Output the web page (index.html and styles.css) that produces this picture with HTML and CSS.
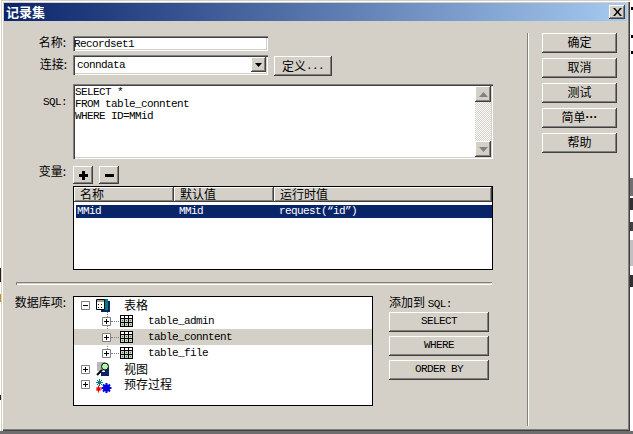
FILE: index.html
```html
<!DOCTYPE html>
<html lang="zh">
<head>
<meta charset="utf-8">
<title>记录集</title>
<link rel="stylesheet" href="styles.css">
</head>
<body>
<div class="desktop">
  <span class="bit bit-a"></span><span class="bit bit-b"></span><span class="bit bit-c"></span>
  <span class="bit bit-d"></span><span class="bit bit-e"></span><span class="bit bit-f"></span>
  <span class="bit bit-g"></span><span class="bit bit-h"></span><span class="bit bit-i"></span>
  <span class="bit bit-j"></span><span class="bit bit-k"></span>
  <div class="dialog">
    <header class="titlebar">
      <span class="title">记录集</span>
      <button class="close" type="button" aria-label="关闭">
        <svg width="9" height="8" viewBox="0 0 9 8"><path d="M0 0h2l2.500 3L7 0h2L5.500 4 9 8H7L4.500 5 2 8H0l3.500-4z" fill="#000"/></svg>
      </button>
    </header>
    <div class="main">
      <form class="form">
        <div class="row row-name">
          <label class="label">名称:</label>
          <div class="input latin">Recordset1</div>
        </div>
        <div class="row row-conn">
          <label class="label">连接:</label>
          <div class="select latin">
            <span class="select-value">conndata</span>
            <span class="select-arrow"><svg width="7" height="4" viewBox="0 0 7 4"><path d="M0 0h7L3.500 4z" fill="#000"/></svg></span>
          </div>
          <button class="btn btn-define" type="button">定义<span class="latin">...</span></button>
        </div>
        <div class="row row-sql">
          <label class="label label-sql latin">SQL:</label>
          <div class="sql">
            <pre class="sql-text latin">SELECT *
FROM table_conntent
WHERE ID=MMid</pre>
            <div class="scrollbar">
              <span class="scroll-btn"><svg width="9" height="5" viewBox="0 0 9 5"><path d="M4.500 0L9 5H0z" fill="#808080"/></svg></span>
              <span class="scroll-track"></span>
              <span class="scroll-btn"><svg width="9" height="5" viewBox="0 0 9 5"><path d="M0 0h9L4.500 5z" fill="#808080"/></svg></span>
            </div>
          </div>
        </div>
        <div class="row row-vars">
          <label class="label">变量:</label>
          <button class="btn btn-icon" type="button" aria-label="添加"><svg width="9" height="9" viewBox="0 0 9 9"><path d="M3 0h3v3h3v3H6v3H3V6H0V3h3z" fill="#000"/></svg></button>
          <button class="btn btn-icon" type="button" aria-label="删除"><svg width="9" height="3" viewBox="0 0 9 3"><path d="M0 0h9v3H0z" fill="#000"/></svg></button>
        </div>
        <div class="row row-table">
          <div class="vars">
            <div class="vars-head">
              <span class="th">名称</span><span class="th">默认值</span><span class="th">运行时值</span>
            </div>
            <div class="vars-row latin">
              <span>MMid</span><span>MMid</span><span>request(“id”)</span>
            </div>
          </div>
        </div>
        <div class="separator"></div>
        <div class="row row-db">
          <label class="label label-db">数据库项:</label>
          <div class="tree">
            <span class="tree-line"></span>
            <div class="node">
              <span class="exp"><svg width="9" height="9" viewBox="0 0 9 9"><path d="M.5.5h8v8h-8z" fill="#fff" stroke="#808080"/><path d="M2 4h5v1H2z"/></svg></span>
              <svg class="node-icon" width="14" height="14" viewBox="0 0 14 14"><path d="M5 3h9v11H5z" fill="#0a246a"/><path d="M6 1h6v11H6z" fill="#007c7c"/><path d="M.5 1.500h8v10h-8z" fill="#fff" stroke="#000"/><path d="M1 2h7v2H1z" fill="#a0a0a0"/><path d="M2 6h1v1H2zM5 6h1v1H5zM2 9h1v1H2zM5 9h1v1H5z"/></svg>
              <span class="node-text node-cjk">表格</span>
            </div>
            <div class="node child">
              <span class="exp"><svg width="9" height="9" viewBox="0 0 9 9"><path d="M.5.5h8v8h-8z" fill="#fff" stroke="#808080"/><path d="M2 4h5v1H2zM4 2h1v5H4z"/></svg></span>
              <span class="dots"></span>
              <svg class="node-icon" width="13" height="12" viewBox="0 0 13 12"><path d="M0 0h13v12H0z" fill="#000"/><path d="M1 1h3v2H1zM5 1h3v2H5zM9 1h3v2H9z" fill="#fff"/><path d="M1 4h3v3H1zM5 4h3v3H5zM9 4h3v3H9zM1 8h3v3H1zM5 8h3v3H5zM9 8h3v3H9z" fill="#d4d0c8"/><path d="M2 5h1v1H2zM6 5h1v1H6zM10 5h1v1h-1zM2 9h1v1H2zM6 9h1v1H6zM10 9h1v1h-1z" fill="#00a050"/></svg>
              <span class="node-text latin">table_admin</span>
            </div>
            <div class="node child is-hover">
              <span class="exp"><svg width="9" height="9" viewBox="0 0 9 9"><path d="M.5.5h8v8h-8z" fill="#fff" stroke="#808080"/><path d="M2 4h5v1H2zM4 2h1v5H4z"/></svg></span>
              <span class="dots"></span>
              <svg class="node-icon" width="13" height="12" viewBox="0 0 13 12"><path d="M0 0h13v12H0z" fill="#000"/><path d="M1 1h3v2H1zM5 1h3v2H5zM9 1h3v2H9z" fill="#fff"/><path d="M1 4h3v3H1zM5 4h3v3H5zM9 4h3v3H9zM1 8h3v3H1zM5 8h3v3H5zM9 8h3v3H9z" fill="#d4d0c8"/><path d="M2 5h1v1H2zM6 5h1v1H6zM10 5h1v1h-1zM2 9h1v1H2zM6 9h1v1H6zM10 9h1v1h-1z" fill="#00a050"/></svg>
              <span class="node-text latin">table_conntent</span>
            </div>
            <div class="node child">
              <span class="exp"><svg width="9" height="9" viewBox="0 0 9 9"><path d="M.5.5h8v8h-8z" fill="#fff" stroke="#808080"/><path d="M2 4h5v1H2zM4 2h1v5H4z"/></svg></span>
              <span class="dots"></span>
              <svg class="node-icon" width="13" height="12" viewBox="0 0 13 12"><path d="M0 0h13v12H0z" fill="#000"/><path d="M1 1h3v2H1zM5 1h3v2H5zM9 1h3v2H9z" fill="#fff"/><path d="M1 4h3v3H1zM5 4h3v3H5zM9 4h3v3H9zM1 8h3v3H1zM5 8h3v3H5zM9 8h3v3H9z" fill="#d4d0c8"/><path d="M2 5h1v1H2zM6 5h1v1H6zM10 5h1v1h-1zM2 9h1v1H2zM6 9h1v1H6zM10 9h1v1h-1z" fill="#00a050"/></svg>
              <span class="node-text latin">table_file</span>
            </div>
            <div class="node">
              <span class="exp"><svg width="9" height="9" viewBox="0 0 9 9"><path d="M.5.5h8v8h-8z" fill="#fff" stroke="#808080"/><path d="M2 4h5v1H2zM4 2h1v5H4z"/></svg></span>
              <svg class="node-icon" width="14" height="14" viewBox="0 0 14 14"><path d="M1 0h8v9H1z" fill="#b8b8b8"/><path d="M9 5h4v9H5v-4h4z" fill="#0a246a"/><circle cx="9" cy="4.500" r="3.500" fill="#b0f8b0" stroke="#000"/><path d="M6 8L1 13" stroke="#000" stroke-width="2"/></svg>
              <span class="node-text node-cjk">视图</span>
            </div>
            <div class="node node-last">
              <span class="exp"><svg width="9" height="9" viewBox="0 0 9 9"><path d="M.5.5h8v8h-8z" fill="#fff" stroke="#808080"/><path d="M2 4h5v1H2zM4 2h1v5H4z"/></svg></span>
              <svg class="node-icon" width="16" height="15" viewBox="0 0 16 15"><circle cx="3.500" cy="3.500" r="1.800" fill="#007c7c"/><path d="M3.500 0v7M0 3.500h7M1 1l5 5M6 1L1 6" stroke="#007c7c"/><circle cx="2.500" cy="10" r="1.800" fill="#f00000"/><path d="M2.500 6.500v7M0 10h6M.500 8l4 4M4.500 8l-4 4" stroke="#f00000"/><circle cx="10.500" cy="9" r="3.500" fill="#0000e0"/><path d="M10.500 4v10M5.500 9h10M7 5.500l7 7M14 5.500l-7 7" stroke="#0000e0" stroke-width="2"/></svg>
              <span class="node-text node-cjk">预存过程</span>
            </div>
          </div>
          <div class="add-sql">
            <div class="add-title">添加到 <span class="latin">SQL:</span></div>
            <button class="btn btn-sql latin" type="button">SELECT</button>
            <button class="btn btn-sql latin" type="button">WHERE</button>
            <button class="btn btn-sql latin" type="button">ORDER BY</button>
          </div>
        </div>
      </form>
      <div class="divider"></div>
      <div class="actions">
        <button class="btn btn-action" type="button">确定</button>
        <button class="btn btn-action" type="button">取消</button>
        <button class="btn btn-action" type="button">测试</button>
        <button class="btn btn-action" type="button">简单<b class="ell">···</b></button>
        <button class="btn btn-action" type="button">帮助</button>
      </div>
    </div>
  </div>
</div>
</body>
</html>
```

FILE: styles.css
```css
* { box-sizing: border-box; }
html, body { margin: 0; padding: 0; }
body {
  width: 633px;
  height: 434px;
  overflow: hidden;
  background: #fff;
  font: 12px/14px "Noto Sans CJK SC", "Liberation Sans", sans-serif;
  color: #000;
}
.desktop {
  position: relative;
  width: 633px;
  height: 434px;
  background: linear-gradient(#6e6e6e, #6e6e6e) left bottom / 100% 3px no-repeat, #fff;
}
.bit { position: absolute; display: block; background: #000; }
.bit-a { left: 631px; top: 7px; width: 2px; height: 3px; }
.bit-b { left: 631px; top: 35px; width: 2px; height: 3px; }
.bit-c { left: 631px; top: 51px; width: 2px; height: 3px; }
.bit-d { left: 630px; top: 178px; width: 3px; height: 18px; background: #707070; }
.bit-e { left: 630px; top: 198px; width: 3px; height: 12px; background: #303030; }
.bit-f { left: 630px; top: 222px; width: 3px; height: 9px; background: #404040; }
.bit-g { left: 630px; top: 240px; width: 3px; height: 26px; background: #c0c0c0; }
.bit-h { left: 630px; top: 275px; width: 3px; height: 12px; background: #303030; }
.bit-i { left: 0; top: 294px; width: 1px; height: 8px; background: #c89020; }
.bit-j { left: 0; top: 268px; width: 1px; height: 14px; background: #202020; }
.bit-k { left: 0; top: 395px; width: 1px; height: 5px; background: #202020; }

.dialog {
  position: absolute;
  left: 1px;
  top: 0;
  width: 629px;
  height: 431px;
  padding: 3px 3px 0 3px;
  background: #d4d0c8;
  box-shadow: inset 1px 1px #d4d0c8, inset 2px 2px #fff, inset -1px -1px #404040, inset -2px -2px #808080;
}
.titlebar {
  display: flex;
  align-items: center;
  justify-content: space-between;
  height: 18px;
  padding: 0 2px;
  background: linear-gradient(90deg, #0a246a, #a6caf0);
}
.title { color: #fff; font-weight: 700; font-size: 13px; }
.close {
  display: flex;
  align-items: center;
  justify-content: center;
  width: 16px;
  height: 14px;
  padding: 0;
  border: 0;
  background: #d4d0c8;
  box-shadow: inset -1px -1px #404040, inset 1px 1px #fff, inset -2px -2px #808080;
}

.main { display: flex; align-items: flex-start; }
.form { flex: none; width: 523px; padding-top: 15px; }
.row { display: flex; align-items: flex-start; padding-left: 69px; position: relative; }
.label {
  position: absolute;
  right: calc(100% - 63px);
  white-space: nowrap;
  line-height: 14px;
}
.row-name .label { top: -1px; right: calc(100% - 62px); }
.btn {
  padding: 0;
  border: 0;
  background: #d4d0c8;
  color: #000;
  font: inherit;
  box-shadow: inset -1px -1px #404040, inset 1px 1px #fff, inset -2px -2px #808080;
  display: flex;
  align-items: center;
  justify-content: center;
}
.latin {
  font-family: "Liberation Mono", monospace;
  font-size: 11px;
  letter-spacing: -0.6px;
}
.input, .select, .sql {
  background: #fff;
  box-shadow: inset 1px 1px #808080, inset 2px 2px #404040, inset -1px -1px #fff, inset -2px -2px #d4d0c8;
}
.input {
  width: 195px;
  height: 15px;
  padding: 2px 0 0 1px;
  line-height: 13px;
}
.row-conn { margin-top: 4px; }
.row-conn .label { top: 2px; }
.select {
  display: flex;
  justify-content: space-between;
  width: 195px;
  height: 20px;
  padding: 2px;
  line-height: 17px;
}
.select-value { padding-left: 2px; }
.select-arrow {
  display: flex;
  align-items: center;
  justify-content: center;
  width: 15px;
  height: 15px;
  background: #d4d0c8;
  box-shadow: inset -1px -1px #404040, inset 1px 1px #fff, inset -2px -2px #808080;
}
.btn-define { width: 58px; height: 20px; margin: 1px 0 0 6px; }

.row-sql { margin-top: 8px; }
.label-sql { top: 11px; }
.sql {
  display: flex;
  justify-content: space-between;
  width: 420px;
  height: 75px;
  padding: 2px;
}
.sql-text { margin: 0; line-height: 12px; }
.scrollbar { display: flex; flex-direction: column; width: 16px; height: 71px; }
.scroll-btn {
  flex: none;
  display: flex;
  align-items: center;
  justify-content: center;
  height: 16px;
  background: #d4d0c8;
  box-shadow: inset -1px -1px #404040, inset 1px 1px #fff, inset -2px -2px #808080;
}
.scroll-track {
  flex: 1;
  background: repeating-conic-gradient(#fff 0 25%, #d4d0c8 0 50%) 0 0 / 2px 2px;
}

.row-vars { margin-top: 7px; gap: 6px; }
.row-vars .label { top: -2px; right: calc(100% - 62px); }
.btn-icon { width: 20px; height: 18px; }

.row-table { margin-top: 2px; }
.vars {
  width: 420px;
  height: 84px;
  background: #fff;
  border: 1px solid #000;
}
.vars-head {
  display: grid;
  grid-template-columns: 100px 100px 1fr;
  height: 15px;
}
.th {
  padding-left: 6px;
  line-height: 13px;
  background: #d4d0c8;
  box-shadow: inset -1px -1px #404040, inset 1px 1px #fff, inset -2px -2px #808080;
}
.vars-row {
  display: grid;
  grid-template-columns: 102px 100px 1fr;
  height: 13px;
  margin: 3px 0 0 2px;
  padding-left: 1px;
  background: #0a246a;
  color: #fff;
  line-height: 13px;
}

.separator {
  width: 476px;
  height: 3px;
  margin: 12px 0 0 12px;
  background: #d4d0c8;
  box-shadow: inset 0 1px #808080, inset 1px 0 #808080, inset -1px -1px #fff;
}

.row-db { margin-top: 11px; }
.label-db { top: -1px; right: calc(100% - 62px); }
.tree {
  position: relative;
  flex: none;
  width: 300px;
  height: 110px;
  background: #fff;
  border: 1px solid #000;
}
.tree-line {
  position: absolute;
  left: 33px;
  top: 14px;
  height: 42px;
  border-left: 1px dotted #808080;
}
.node {
  position: relative;
  display: flex;
  align-items: center;
  height: 16px;
  padding-left: 7px;
}
.node-icon { flex: none; position: absolute; left: 22px; }
.node-text { position: absolute; left: 50px; white-space: nowrap; }
.node-cjk { margin-top: -1px; }
.node .exp { display: flex; }
.child { padding-left: 28px; }
.child .node-icon { left: 46px; }
.child .node-text { left: 74px; }
.node-last { height: 15px; }
.node-last .node-icon { margin-top: 3px; }
.dots {
  position: absolute;
  left: 37px;
  top: 8px;
  width: 8px;
  border-top: 1px dotted #808080;
}
.is-hover { background: #d4d0c8; }

.add-sql { margin-left: 16px; display: flex; flex-direction: column; }
.add-title { height: 16px; line-height: 12px; white-space: nowrap; }
.btn-sql { width: 100px; height: 20px; margin-bottom: 4px; padding-bottom: 2px; }

.divider {
  flex: none;
  width: 2px;
  height: 393px;
  margin-top: 12px;
  background: #fff;
  box-shadow: inset 1px 0 #808080;
}
.actions {
  display: flex;
  flex-direction: column;
  gap: 5px;
  margin: 12px 0 0 13px;
}
.btn-action { width: 75px; height: 20px; padding-bottom: 2px; }
.ell { font-family: "Liberation Sans", sans-serif; font-weight: 700; font-size: 12px; letter-spacing: 0; }
```
